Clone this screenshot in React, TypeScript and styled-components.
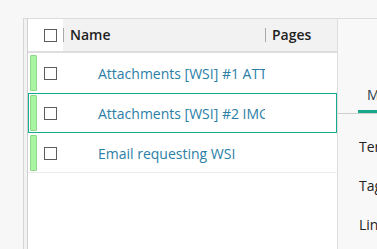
import React from 'react';
import styled, { createGlobalStyle } from 'styled-components';

const GlobalStyle = createGlobalStyle`
  html, body {
    margin: 0;
    padding: 0;
    background: #f7f7f7;
    font-family: 'Open Sans', 'Liberation Sans', sans-serif;
    font-size: 14px;
    line-height: 20px;
  }
  * {
    box-sizing: border-box;
  }
`;

const Page = styled.div`
  height: 100vh;
  overflow: hidden;
  padding: 18px 0 0 23px;
`;

const Panel = styled.div`
  display: flex;
  height: 100%;
  border-top: 1px solid #dcdcdc;
  border-left: 1px solid #d6d6d6;
  padding-left: 3px;
  background: #f3f3f3;
`;

const Table = styled.div`
  width: 311px;
  flex: none;
  background: #fff;
  border-left: 1px solid #d0d0d0;
  border-right: 1px solid #dedede;
`;

const HeaderRow = styled.div`
  display: flex;
  height: 34px;
  border-bottom: 2px solid #dedede;
`;

const CheckCell = styled.div`
  width: 35px;
  flex: none;
  display: flex;
  align-items: center;
  padding-left: 16px;
  background: #fff;
`;

const HeaderCell = styled.div<{ $width?: number }>`
  display: flex;
  align-items: center;
  background: #f2f2f2;
  color: #1f1f1f;
  font-weight: 600;
  ${({ $width }) => ($width ? `width: ${$width}px; flex: none;` : 'flex: 1;')}

  &::before {
    content: '';
    width: 1px;
    height: 14px;
    margin-right: 6px;
    background: #a9a9a9;
  }
`;

const Checkbox = styled.span`
  display: block;
  width: 13px;
  height: 13px;
  border: 1px solid #5c5c5c;
  background: #fff;
`;

const Row = styled.div<{ $selected?: boolean; $last?: boolean }>`
  display: flex;
  align-items: stretch;
  height: 40px;
  border: 1px solid ${({ $selected }) => ($selected ? '#17ab8d' : 'transparent')};
  ${({ $last, $selected }) => ($last && !$selected ? 'border-bottom-color: #ebebeb;' : '')}
  padding: 1px 0 1px 1px;
`;

const StatusBar = styled.span`
  width: 7px;
  flex: none;
  background: #a9f5a2;
  border: 1px solid #8fd88a;
  border-radius: 1px;
`;

const RowCheck = styled.div`
  width: 20px;
  flex: none;
  display: flex;
  align-items: center;
  padding-left: 7px;
`;

const NameCell = styled.div`
  width: 208px;
  flex: none;
  padding: 2px 0 0 41px;
  display: flex;
  align-items: center;
  overflow: hidden;
  white-space: nowrap;
  color: #2b80a7;
`;

const SidePanel = styled.div`
  flex: 1;
  background: #f8f8f8;
  overflow: hidden;
  white-space: nowrap;
`;

const Tabs = styled.div`
  display: flex;
  padding: 66px 0 0 20px;
  border-bottom: 1px solid #cfcfcf;
`;

const Tab = styled.div`
  padding: 0 9px 5px;
  border-bottom: 3px solid #17a98b;
  color: #2d3b4a;
`;

const Fields = styled.div`
  display: flex;
  flex-direction: column;
  gap: 19px;
  padding: 23px 0 0 21px;
  color: #222;
`;

const documents = [
  { name: 'Attachments [WSI] #1 ATTACHMENT', selected: false },
  { name: 'Attachments [WSI] #2 IMG_0042.jpg', selected: true },
  { name: 'Email requesting WSI', selected: false },
];

const App = () => (
  <>
    <GlobalStyle />
    <Page>
      <Panel>
        <Table>
          <HeaderRow>
            <CheckCell>
              <Checkbox />
            </CheckCell>
            <HeaderCell $width={202}>Name</HeaderCell>
            <HeaderCell>Pages</HeaderCell>
          </HeaderRow>
          {documents.map((doc, i) => (
            <Row key={doc.name} $selected={doc.selected} $last={i === documents.length - 1}>
              <StatusBar />
              <RowCheck>
                <Checkbox />
              </RowCheck>
              <NameCell>{doc.name}</NameCell>
            </Row>
          ))}
        </Table>
        <SidePanel>
          <Tabs>
            <Tab>Metadata</Tab>
          </Tabs>
          <Fields>
            <span>Territory</span>
            <span>Tags</span>
            <span>Links</span>
          </Fields>
        </SidePanel>
      </Panel>
    </Page>
  </>
);

export default App;
